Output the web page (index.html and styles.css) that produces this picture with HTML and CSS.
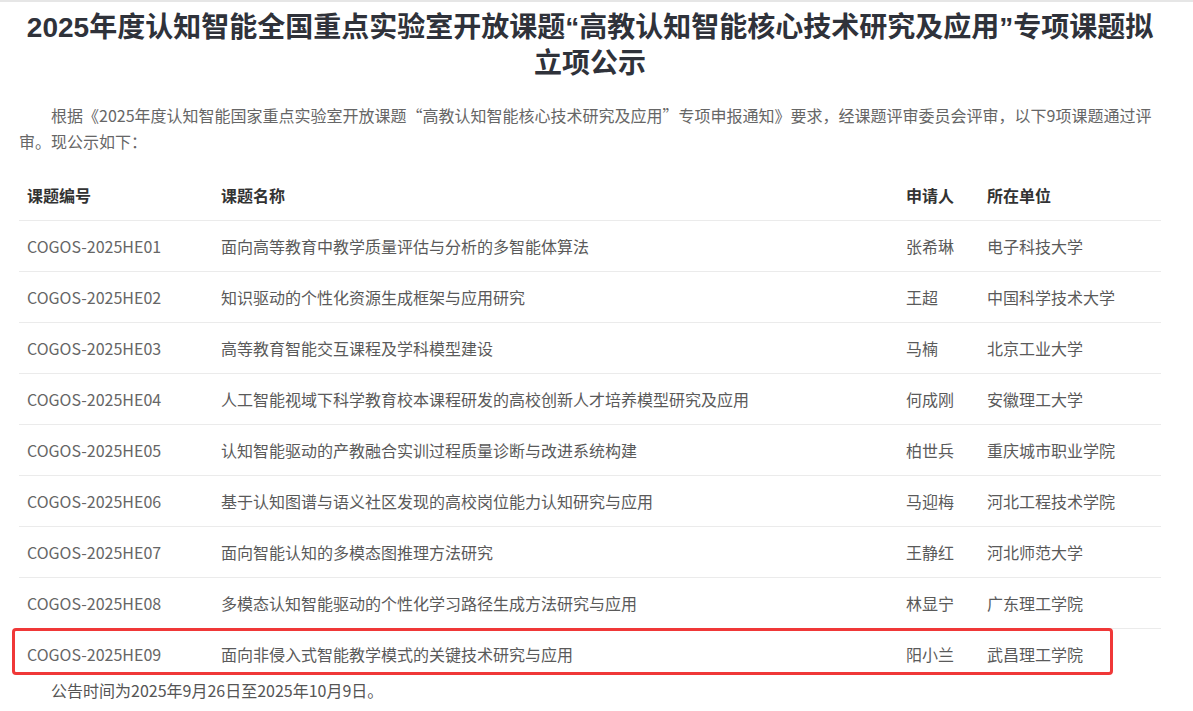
FILE: index.html
```html
<!DOCTYPE html>
<html lang="zh-CN">
<head>
<meta charset="UTF-8">
<meta name="viewport" content="width=device-width, initial-scale=1.0">
<title>专项课题拟立项公示</title>
<link rel="stylesheet" href="styles.css">
</head>
<body>
  <div class="article">
    <h1 class="title">2025年度认知智能全国重点实验室开放课题“高教认知智能核心技术研究及应用”专项课题拟立项公示</h1>
    <p class="intro">根据《2025年度认知智能国家重点实验室开放课题“高教认知智能核心技术研究及应用”专项申报通知》要求，经课题评审委员会评审，以下9项课题通过评审。现公示如下：</p>

    <div class="table-wrap">
      <table class="list">
        <colgroup>
          <col class="c-code">
          <col class="c-name">
          <col class="c-person">
          <col class="c-unit">
        </colgroup>
        <thead>
          <tr><th>课题编号</th><th>课题名称</th><th>申请人</th><th>所在单位</th></tr>
        </thead>
        <tbody>
          <tr><td>COGOS-2025HE01</td><td>面向高等教育中教学质量评估与分析的多智能体算法</td><td>张希琳</td><td>电子科技大学</td></tr>
          <tr><td>COGOS-2025HE02</td><td>知识驱动的个性化资源生成框架与应用研究</td><td>王超</td><td>中国科学技术大学</td></tr>
          <tr><td>COGOS-2025HE03</td><td>高等教育智能交互课程及学科模型建设</td><td>马楠</td><td>北京工业大学</td></tr>
          <tr><td>COGOS-2025HE04</td><td>人工智能视域下科学教育校本课程研发的高校创新人才培养模型研究及应用</td><td>何成刚</td><td>安徽理工大学</td></tr>
          <tr><td>COGOS-2025HE05</td><td>认知智能驱动的产教融合实训过程质量诊断与改进系统构建</td><td>柏世兵</td><td>重庆城市职业学院</td></tr>
          <tr><td>COGOS-2025HE06</td><td>基于认知图谱与语义社区发现的高校岗位能力认知研究与应用</td><td>马迎梅</td><td>河北工程技术学院</td></tr>
          <tr><td>COGOS-2025HE07</td><td>面向智能认知的多模态图推理方法研究</td><td>王静红</td><td>河北师范大学</td></tr>
          <tr><td>COGOS-2025HE08</td><td>多模态认知智能驱动的个性化学习路径生成方法研究与应用</td><td>林显宁</td><td>广东理工学院</td></tr>
          <tr class="last"><td>COGOS-2025HE09</td><td>面向非侵入式智能教学模式的关键技术研究与应用</td><td>阳小兰</td><td>武昌理工学院</td></tr>
        </tbody>
      </table>
      <!-- 标注框 -->
      <div class="mark"></div>
    </div>

    <p class="notice">公告时间为2025年9月26日至2025年10月9日。</p>
  </div>
</body>
</html>
```

FILE: styles.css
```css
body {
  margin: 0;
  padding: 0;
  background-color: #ffffff;
  border-top: 2px solid #e6e6e6;
  font-family: "Noto Sans CJK SC", "Liberation Sans", sans-serif;
  color: #555;
}

.article {
  width: 1142px;
  margin-left: 19px;
}

.title {
  margin: 8px 0 0;
  font-family: "Liberation Sans", "Noto Sans CJK SC", sans-serif;
  font-size: 28px;
  line-height: 36px;
  font-weight: bold;
  text-align: center;
  color: #2f323a;
}

.intro {
  margin: 20px 0 0;
  font-size: 16px;
  line-height: 26px;
  text-indent: 2em;
  color: #666;
}

.table-wrap {
  position: relative;
  margin-top: 16px;
}

.list {
  width: 100%;
  border-collapse: collapse;
  table-layout: fixed;
  font-size: 16px;
}

.c-code { width: 194px; }
.c-name { width: 685px; }
.c-person { width: 81px; }
.c-unit { width: auto; }

.list th,
.list td {
  text-align: left;
  padding: 0 0 0 8px;
  height: 50px;
  border-bottom: 1px solid #ebebeb;
  white-space: nowrap;
}

.list th {
  font-weight: bold;
  color: #333;
}

.list td {
  color: #5a5a5a;
}

.list td:first-child {
  color: #666;
}

.list tr.last td {
  border-bottom: none;
}

/* 红色标注框 */
.mark {
  position: absolute;
  left: -7px;
  bottom: 4px;
  width: 1095px;
  height: 41px;
  border: 3px solid #f03838;
  border-radius: 4px;
}

.notice {
  margin: 0;
  font-size: 16px;
  line-height: 22px;
  text-indent: 2em;
  color: #555;
}
```
